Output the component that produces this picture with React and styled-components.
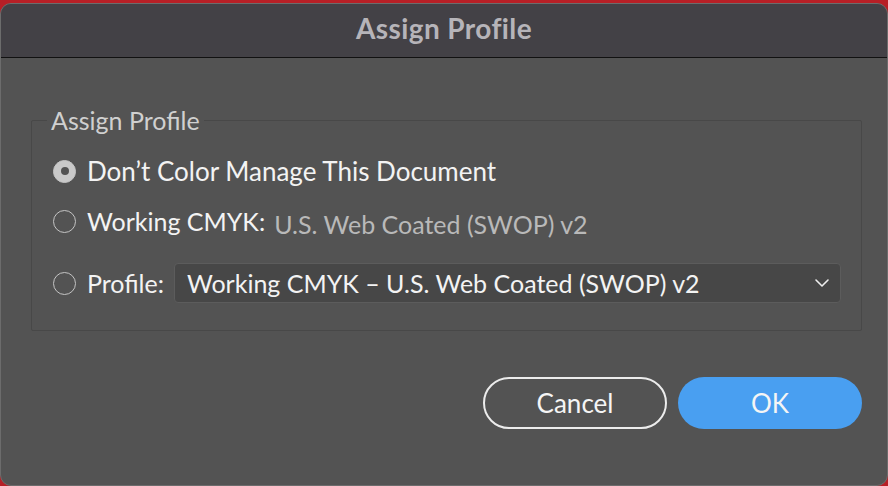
import React from "react";
import styled, { createGlobalStyle } from "styled-components";

const Global = createGlobalStyle`
  html, body { margin: 0; padding: 0; }
  body {
    width: 888px;
    height: 486px;
    overflow: hidden;
    background: #b71f26;
    font-family: Lato, "Noto Sans", "Liberation Sans", sans-serif;
  }
  #root { height: 100%; }
`;

const Window = styled.div`
  box-sizing: border-box;
  margin-top: 3px;
  height: 483px;
  border-radius: 11px;
  border: 1px solid #6c6c6c;
  background: #535353;
  overflow: hidden;
  display: flex;
  flex-direction: column;
`;

const TitleBar = styled.div`
  box-sizing: border-box;
  height: 54px;
  flex: none;
  padding-bottom: 5px;
  background: #434146;
  border-bottom: 1px solid #111;
  display: flex;
  align-items: center;
  justify-content: center;
  color: #b6b4b9;
  font-weight: 700;
  font-size: 28px;
  letter-spacing: 0.4px;
`;

const Body = styled.div`
  display: flex;
  flex-direction: column;
  padding: 48px 25px 0 30px;
`;

const Group = styled.fieldset`
  margin: 0;
  padding: 22px 20px 27px 21px;
  border: 1px solid #484848;
  border-radius: 2px;
  display: flex;
  flex-direction: column;
  min-width: 0;
`;

const Legend = styled.legend`
  padding: 0 4px;
  margin-left: -6px;
  color: #d0d0d0;
  font-size: 25px;
  line-height: 28px;
`;

const Row = styled.label`
  display: flex;
  align-items: center;
  height: ${(p) => p.$h || 30}px;
  margin-top: ${(p) => p.$mt || 0}px;
  color: #f3f3f3;
  font-size: ${(p) => p.$fs || 25}px;
`;

const Radio = styled.span`
  box-sizing: border-box;
  flex: none;
  width: 23px;
  height: 23px;
  border-radius: 50%;
  margin-right: 11px;
  border: 1.5px solid #c4c4c4;
  background: ${(p) => (p.$on ? "#c9c9c9" : "transparent")};
  display: flex;
  align-items: center;
  justify-content: center;
  &::after {
    content: "";
    display: ${(p) => (p.$on ? "block" : "none")};
    width: 8px;
    height: 8px;
    border-radius: 50%;
    background: #535353;
  }
`;

const Value = styled.span`
  margin-left: 9px;
  color: #b9b9b9;
  font-size: 25px;
  padding-top: 6px;
`;

const Select = styled.div`
  box-sizing: border-box;
  flex: 1;
  height: 40px;
  margin-left: 10px;
  background: #474747;
  border: 1px solid #5c5c5c;
  border-radius: 4px;
  padding: 0 10px 0 12px;
  display: flex;
  align-items: center;
  justify-content: space-between;
  color: #f3f3f3;
  font-size: 25px;
`;

const Buttons = styled.div`
  display: flex;
  justify-content: flex-end;
  gap: 11px;
  margin-top: 46px;
`;

const Button = styled.button`
  box-sizing: border-box;
  width: 184px;
  height: 52px;
  border-radius: 26px;
  font-family: inherit;
  font-size: 26px;
  color: #f5f5f5;
  border: ${(p) => (p.$primary ? "none" : "2px solid #ececec")};
  background: ${(p) => (p.$primary ? "#499ff1" : "transparent")};
`;

export default function App() {
  return (
    <>
      <Global />
      <Window>
        <TitleBar>Assign Profile</TitleBar>
        <Body>
          <Group>
            <Legend>Assign Profile</Legend>
            <Row $fs={26}>
              <Radio $on />
              Don’t Color Manage This Document
            </Row>
            <Row $mt={20}>
              <Radio />
              Working CMYK:
              <Value>U.S. Web Coated (SWOP) v2</Value>
            </Row>
            <Row $mt={27} $h={40}>
              <Radio />
              Profile:
              <Select>
                <span>Working CMYK – U.S. Web Coated (SWOP) v2</span>
                <svg width="16" height="10" viewBox="0 0 16 10">
                  <polyline
                    points="2,2 8,8 14,2"
                    fill="none"
                    stroke="#eee"
                    strokeWidth="1.6"
                    strokeLinecap="round"
                    strokeLinejoin="round"
                  />
                </svg>
              </Select>
            </Row>
          </Group>
          <Buttons>
            <Button>Cancel</Button>
            <Button $primary>OK</Button>
          </Buttons>
        </Body>
      </Window>
    </>
  );
}
